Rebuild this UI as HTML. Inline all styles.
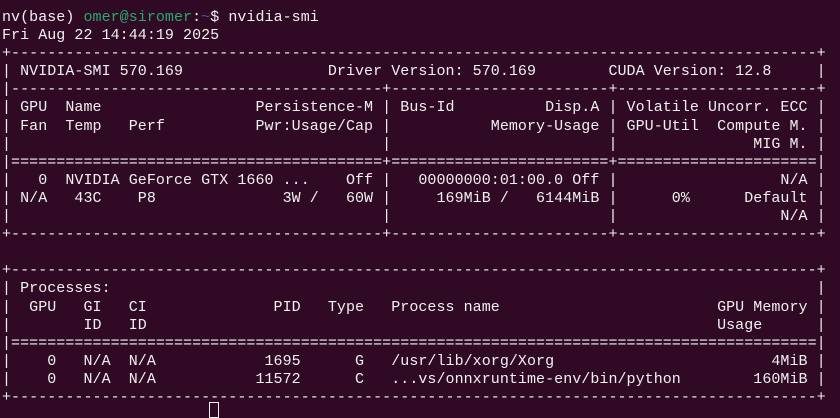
<!DOCTYPE html>
<html><head><meta charset="utf-8"><style>
html,body{margin:0;padding:0;background:#300a24;width:840px;height:406px;overflow:hidden}
pre{margin:0;position:absolute;left:2px;top:9px;font-family:"Liberation Mono",monospace;font-size:15px;line-height:18.1px;letter-spacing:0.05px;color:#f0f0f0}
.g{color:#2aa86c}.b{color:#3a5fb0}
.cur{position:absolute;left:209px;top:402px;width:8px;height:14px;border:1px solid #f0f0f0}
</style></head><body>
<pre>nv(base) <span class="g">omer@siromer</span>:<span class="b">~</span>$ nvidia-smi
Fri Aug 22 14:44:19 2025
+-----------------------------------------------------------------------------------------+
| NVIDIA-SMI 570.169                Driver Version: 570.169        CUDA Version: 12.8     |
|-----------------------------------------+------------------------+----------------------+
| GPU  Name                 Persistence-M | Bus-Id          Disp.A | Volatile Uncorr. ECC |
| Fan  Temp   Perf          Pwr:Usage/Cap |           Memory-Usage | GPU-Util  Compute M. |
|                                         |                        |               MIG M. |
|=========================================+========================+======================|
|   0  NVIDIA GeForce GTX 1660 ...    Off |   00000000:01:00.0 Off |                  N/A |
| N/A   43C    P8              3W /   60W |     169MiB /   6144MiB |      0%      Default |
|                                         |                        |                  N/A |
+-----------------------------------------+------------------------+----------------------+

+-----------------------------------------------------------------------------------------+
| Processes:                                                                              |
|  GPU   GI   CI              PID   Type   Process name                        GPU Memory |
|        ID   ID                                                               Usage      |
|=========================================================================================|
|    0   N/A  N/A            1695      G   /usr/lib/xorg/Xorg                        4MiB |
|    0   N/A  N/A           11572      C   ...vs/onnxruntime-env/bin/python        160MiB |
+-----------------------------------------------------------------------------------------+</pre>
<div class="cur"></div>
</body></html>
